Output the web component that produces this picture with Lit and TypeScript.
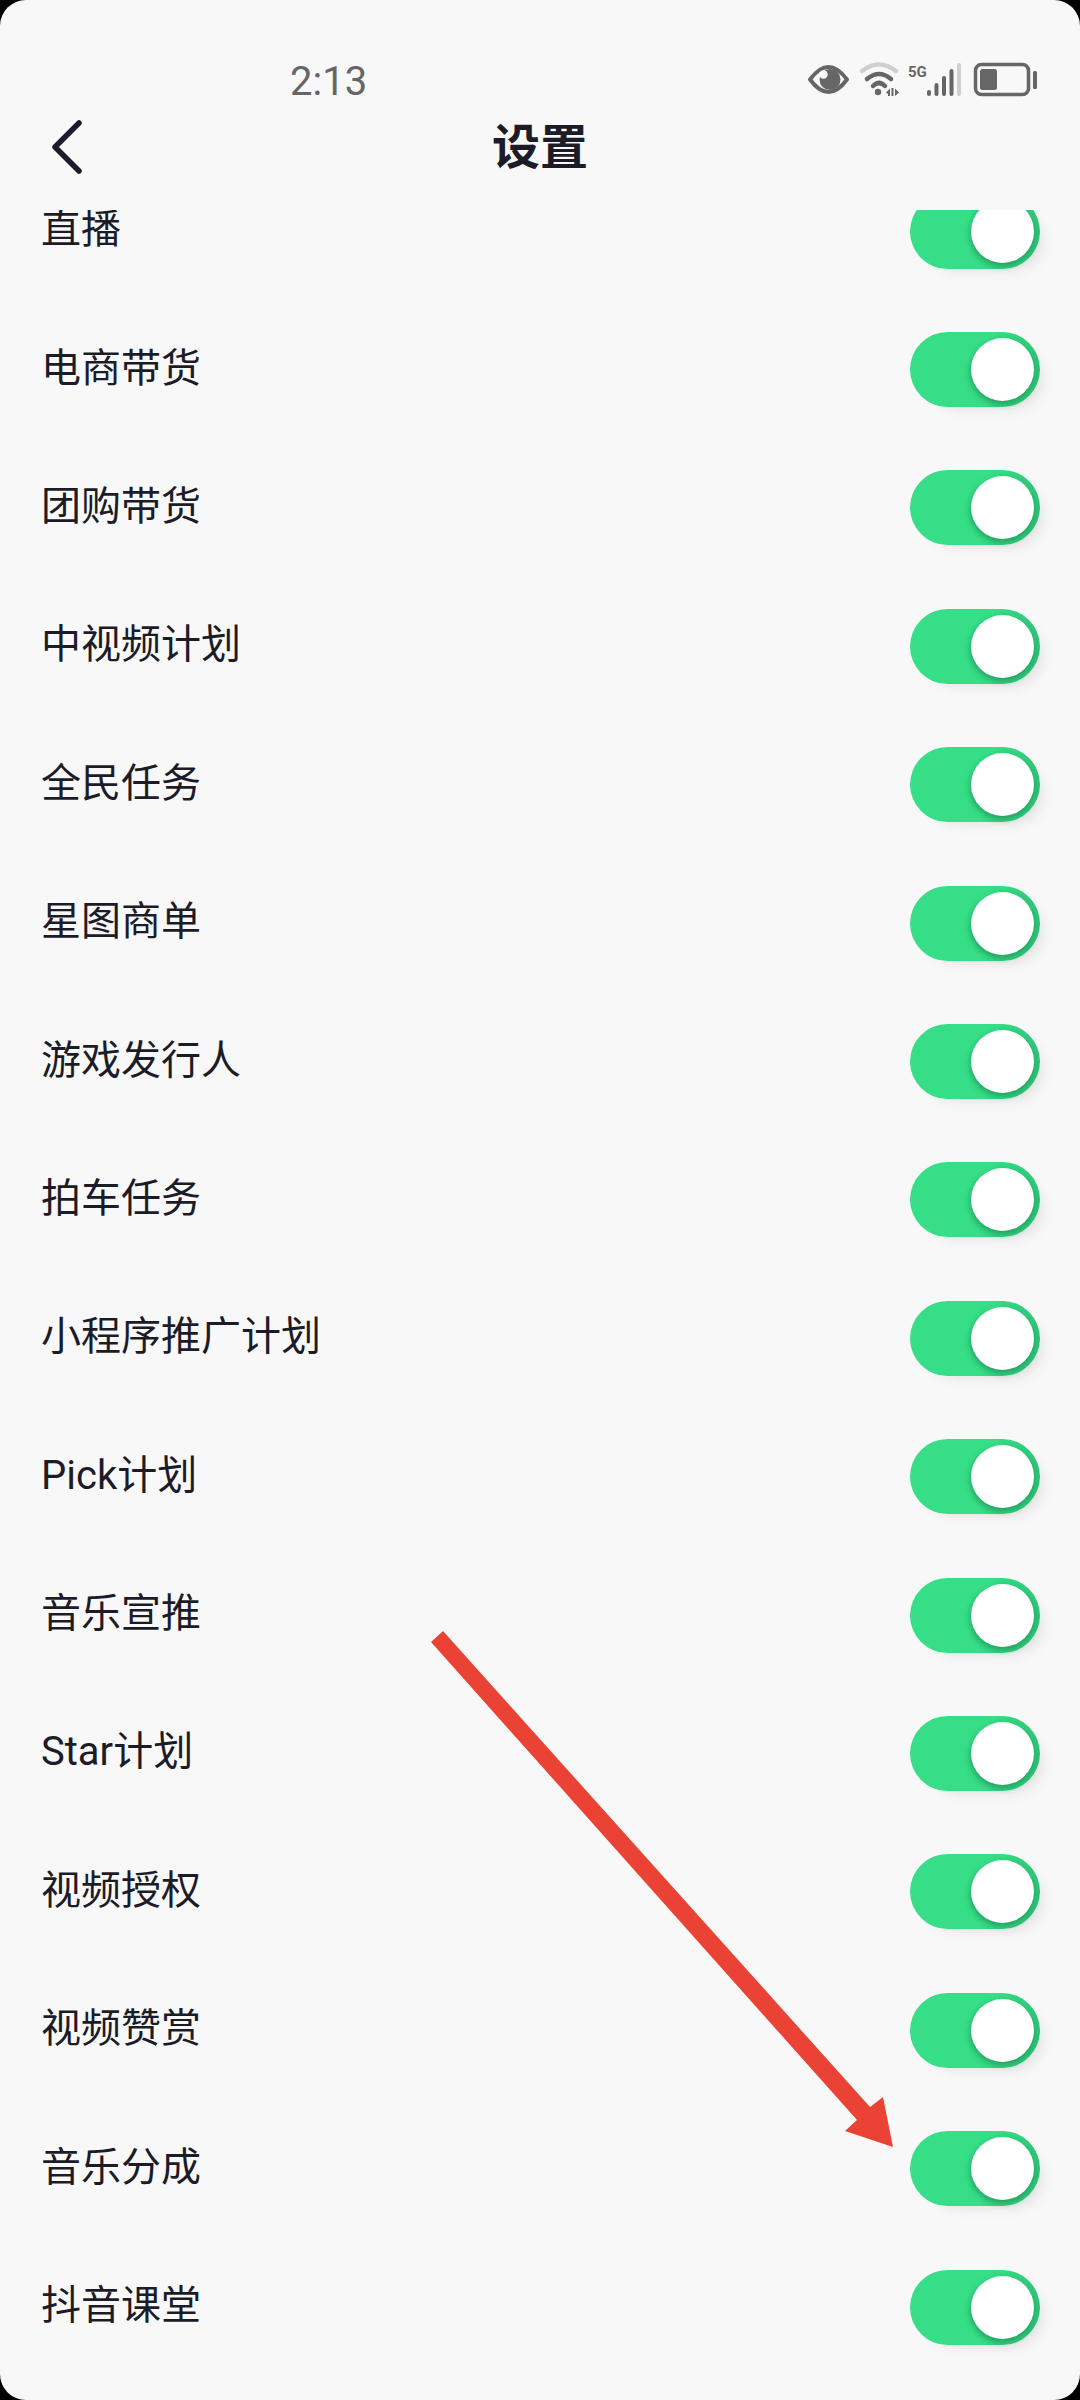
import { LitElement, html, css, svg } from "lit";
import { customElement } from "lit/decorators.js";

const ROWS = ["直播","电商带货","团购带货","中视频计划","全民任务","星图商单","游戏发行人","拍车任务","小程序推广计划","Pick计划","音乐宣推","Star计划","视频授权","视频赞赏","音乐分成","抖音课堂"];

@customElement("app-root")
export class AppRoot extends LitElement {
  static styles = css`
    :host { display: block; width: 1080px; height: 2400px; background: #000; }
    .screen {
      position: relative; width: 1080px; height: 2400px; overflow: hidden;
      border-radius: 26px; background: #f8f8f8; display: flex; flex-direction: column;
      font-family: "Noto Sans CJK SC", "Noto Sans", sans-serif; color: #1c1c28;
    }
    .status { flex: 0 0 110px; display: flex; align-items: flex-start; padding: 40px 40px 0 290px; box-sizing: border-box; }
    .time { font-family: Roboto, sans-serif; font-size: 40px; line-height: 47px; color: #666; margin-top: 18px; }
    .sys { margin-left: auto; display: block; }
    .head { flex: 0 0 100px; display: grid; grid-template-columns: 1fr auto 1fr; align-items: center; padding: 0 52px 34px; box-sizing: border-box; }
    .back { display: block; margin-top: 7px; }
    .title { font-size: 48px; font-weight: 700; line-height: 60px; }
    .list { flex: 1; overflow: hidden; min-height: 0; }
    .rows { margin-top: -48px; display: grid; grid-auto-rows: 138.4px; }
    .row { display: flex; align-items: center; justify-content: space-between; padding: 0 40px 0 41px; }
    .label { font-size: 40px; line-height: 40px; padding-bottom: 2px; font-family: Roboto, "Noto Sans CJK SC", sans-serif; }
    .track {
      position: relative; width: 130px; height: 75px; border-radius: 38px;
      background: linear-gradient(100deg, #36df87 58%, #2dbf75 100%);
      box-shadow: 10px 9px 14px -8px rgba(0,0,0,.10);
    }
    .knob {
      position: absolute; right: 6px; top: 6px; width: 63px; height: 63px; border-radius: 50%;
      background: #fff; box-shadow: -1px 3px 6px rgba(10,90,50,.45);
    }
    .arrow { position: absolute; left: 0; top: 0; pointer-events: none; }
    .s5g { font: 700 15px Roboto, sans-serif; fill: #666; }
  `;

  render() {
    const bars = [[927,90],[934.5,83],[942,76],[949.5,69]];
    return html`<div class="screen">
      <div class="status">
        <div class="time">2:13</div>
        <svg class="sys" width="260" height="60" viewBox="780 40 260 60">
          <path d="M810 79.5 C817 70 824 67 828.5 67 C833 67 840 70 847 79.5 C840 89 833 92 828.5 92 C824 92 817 89 810 79.5 Z" fill="none" stroke="#666" stroke-width="4" stroke-linejoin="round"/>
          <circle cx="830" cy="79.5" r="10.5" fill="#666"/>
          <circle cx="823.5" cy="74.5" r="4.2" fill="#f8f8f8"/>
          <path d="M862 71 Q879 58 896 71" fill="none" stroke="#cfcfcf" stroke-width="4.5" stroke-linecap="round"/>
          <path d="M867 79 Q879 69 891 79" fill="none" stroke="#666" stroke-width="4.5" stroke-linecap="round"/>
          <path d="M873 86 Q879 80 885 86" fill="none" stroke="#666" stroke-width="4.5" stroke-linecap="round"/>
          <circle cx="878" cy="92" r="3.2" fill="#666"/>
          <path d="M886 92.5 L890 88.5 V96 H888 V94 Z M891.5 88 H893.5 V96 H891.5 Z M895 88.5 L899 92.5 L895 96 Z" fill="#666"/>
          <text class="s5g" x="908" y="77">5G</text>
          ${bars.map(([x, y]) => svg`<rect x="${x}" y="${y}" width="4" height="${96 - y}" rx="2" fill="#666"/>`)}
          <rect x="957" y="63" width="4" height="33" rx="2" fill="#cfcfcf"/>
          <rect x="975.5" y="64.5" width="53" height="30" rx="6" fill="none" stroke="#666" stroke-width="3.5"/>
          <rect x="980" y="69" width="17" height="21" rx="2.5" fill="#666"/>
          <rect x="1033" y="71" width="4" height="18" rx="1.5" fill="#666"/>
        </svg>
      </div>
      <div class="head">
        <svg class="back" width="30" height="54" viewBox="0 0 30 54"><path d="M27 3 L3 27 L27 51" fill="none" stroke="#1c1c28" stroke-width="5.5" stroke-linecap="round" stroke-linejoin="round"/></svg>
        <div class="title">设置</div>
        <div></div>
      </div>
      <div class="list">
        <div class="rows">
          ${ROWS.map((r) => html`<div class="row"><span class="label">${r}</span><div class="track"><div class="knob"></div></div></div>`)}
        </div>
      </div>
      <svg class="arrow" width="1080" height="2400" viewBox="0 0 1080 2400">
        <polygon points="431,1642 443,1631 870,2107 883,2097 893,2147 845,2131 857,2120" fill="#ea4335"/>
      </svg>
    </div>`;
  }
}
